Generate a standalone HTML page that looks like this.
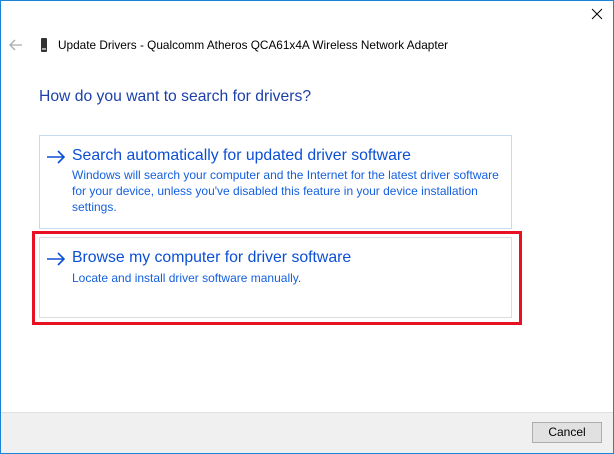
<!DOCTYPE html>
<html><head><style>
*{margin:0;padding:0;box-sizing:border-box}
body{width:614px;height:454px;overflow:hidden;background:#fff;font-family:"Liberation Sans",sans-serif;position:relative}
.win{position:absolute;left:0;top:0;width:614px;height:454px;border:1px solid #1883d7}
.a{position:absolute;white-space:nowrap}
.foot{position:absolute;left:1px;right:1px;top:412px;bottom:1px;background:#f0f0f0;border-top:1px solid #dfdfdf}
.btn{position:absolute;left:532px;top:422px;width:70px;height:21px;border:1px solid #adadad;background:#e1e1e1;font-size:12px;text-align:center;line-height:19px;color:#000}
.lt{color:#0b4fd6;font-size:15.8px}
.ds{color:#1560e0;font-size:12px;line-height:16px}
</style></head><body>
<div class="win"></div>
<svg class="a" style="left:591px;top:8px" width="12" height="12"><path d="M1 1L11 11M11 1L1 11" stroke="#000" stroke-width="1"/></svg>
<svg class="a" style="left:9px;top:39px" width="14" height="12"><path d="M1 6H13M6 1L1 6L6 11" stroke="#aaa" stroke-width="1.3" fill="none"/></svg>
<div class="a" style="left:41px;top:38px;width:6px;height:14px;background:#333;border-radius:1px"></div>
<div class="a" style="left:42px;top:48px;width:4px;height:2px;background:#aaa"></div>
<div class="a" style="left:58px;top:38px;font-size:11.8px;color:#000">Update Drivers - Qualcomm Atheros QCA61x4A Wireless Network Adapter</div>
<div class="a" style="left:39px;top:88px;font-size:15.7px;color:#1c3faa">How do you want to search for drivers?</div>
<div class="a" style="left:39px;top:135px;width:473px;height:94px;border:1px solid #c5daf0"></div>
<svg class="a" style="left:46px;top:150px" width="20" height="14"><path d="M1 7H18M12 1L18 7L12 13" stroke="#0b4fd6" stroke-width="1.6" fill="none"/></svg>
<div class="a lt" style="left:72px;top:147px">Search automatically for updated driver software</div>
<div class="a ds" style="left:72px;top:167px">Windows will search your computer and the Internet for the latest driver software<br>for your device, unless you've disabled this feature in your device installation<br>settings.</div>
<div class="a" style="left:32px;top:231px;width:490px;height:94px;border:3px solid #e81123"></div>
<div class="a" style="left:39px;top:237px;width:473px;height:81px;border:1px solid #dcdcdc"></div>
<svg class="a" style="left:46px;top:252px" width="20" height="14"><path d="M1 7H18M12 1L18 7L12 13" stroke="#0b4fd6" stroke-width="1.6" fill="none"/></svg>
<div class="a lt" style="left:72px;top:249px">Browse my computer for driver software</div>
<div class="a ds" style="left:72px;top:270px">Locate and install driver software manually.</div>
<div class="foot"></div>
<div class="btn">Cancel</div>
</body></html>
